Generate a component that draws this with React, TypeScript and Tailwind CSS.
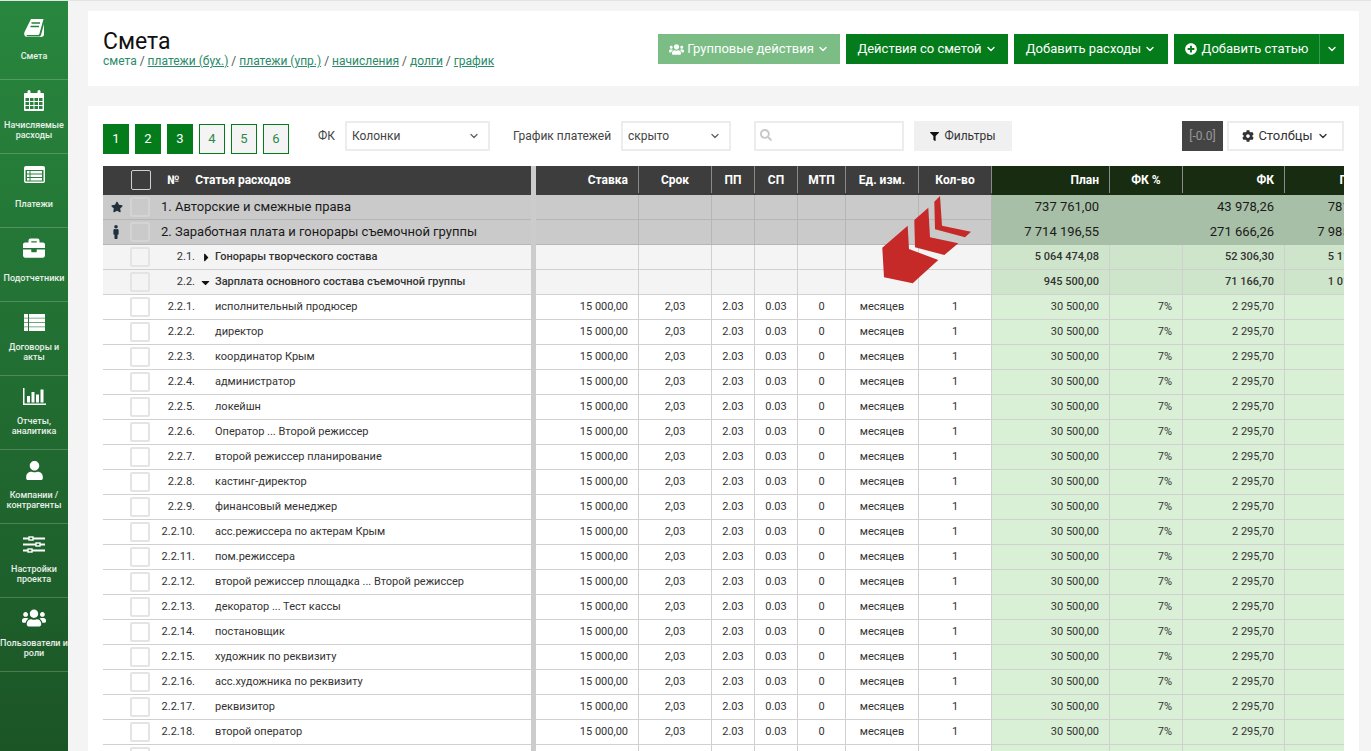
import { ReactNode } from 'react';
import { ChevronDown } from 'lucide-react';
import {
  FaBriefcase,
  FaCaretDown,
  FaCaretRight,
  FaCog,
  FaFilter,
  FaMale,
  FaPlusCircle,
  FaSearch,
  FaStar,
  FaUser,
  FaUsers,
} from 'react-icons/fa';

const GREEN = '#28803c';

const BookIcon = () => (
  <svg width="20" height="18" viewBox="0 0 20 18">
    <path d="M7 0h12.500L15.500 14.500c-.3 1-.8 1.500-2 1.500H4c-1.200 0-1.600.6-1.500 1 .1.300.5.500 1 .5h11.500c1 0 1.500-.4 2-1.500L20 5v11c-.5 1.200-1.500 2-3 2H3.500C1.500 18 .3 16.800.2 15c-.1-1 .2-1.800.7-2.700z" fill="#fff" />
    <path d="M7.500 4h8.500M6.500 7.500h8.500" stroke={GREEN} strokeWidth="1.300" />
  </svg>
);

const CalendarIcon = () => (
  <svg width="20" height="21" viewBox="0 0 20 21" fill="#fff">
    <rect x="0" y="3" width="20" height="18" rx="1" />
    <rect x="3.500" y="0" width="3" height="5" rx="1.500" />
    <rect x="13.500" y="0" width="3" height="5" rx="1.500" />
    <g fill={GREEN}>
      {[8, 12, 16].map((y) =>
        [1.500, 6, 10.500, 15].map((x) => <rect key={`${x}-${y}`} x={x} y={y} width="3.500" height="3" />),
      )}
    </g>
  </svg>
);

const ListAltIcon = () => (
  <svg width="21" height="17" viewBox="0 0 21 17">
    <rect width="21" height="17" rx="2" fill="#fff" />
    <rect x="1.500" y="4" width="18" height="11.500" fill={GREEN} />
    {[5, 8.500, 12].map((y) => (
      <g key={y} fill="#fff">
        <rect x="3" y={y} width="2.500" height="2.500" />
        <rect x="6.500" y={y} width="11.500" height="2.500" />
      </g>
    ))}
  </svg>
);

const ThListIcon = () => (
  <svg width="21" height="17" viewBox="0 0 21 17" fill="#fff">
    {[0, 4.400, 8.800, 13.200].map((y) => (
      <g key={y}>
        <rect x="0" y={y} width="4" height="3.800" />
        <rect x="5" y={y} width="16" height="3.800" />
      </g>
    ))}
  </svg>
);

const ChartIcon = () => (
  <svg width="23" height="17" viewBox="0 0 23 17" fill="#fff">
    <rect x="0" y="0" width="1.500" height="17" />
    <rect x="0" y="15.500" width="23" height="1.500" />
    <rect x="4" y="8" width="3" height="6.500" />
    <rect x="8.500" y="4" width="3" height="10.500" />
    <rect x="13" y="6.500" width="3" height="8" />
    <rect x="17.500" y="1.500" width="3" height="13" />
  </svg>
);

const SlidersIcon = () => (
  <svg width="22" height="17" viewBox="0 0 22 17" fill="none" stroke="#fff" strokeWidth="1.400">
    <path d="M0 2.500h6M10 2.500h12M0 8.500h13M17 8.500h5M0 14.500h5M9 14.500h13" strokeWidth="2" />
    <rect x="6" y="1" width="4" height="3" />
    <rect x="13" y="7" width="4" height="3" />
    <rect x="5" y="13" width="4" height="3" />
  </svg>
);

const navItems: { icon: ReactNode; label: ReactNode }[] = [
  { icon: <BookIcon />, label: 'Смета' },
  { icon: <CalendarIcon />, label: <>Начисляемые<br />расходы</> },
  { icon: <ListAltIcon />, label: 'Платежи' },
  { icon: <FaBriefcase size={22} />, label: 'Подотчетники' },
  { icon: <ThListIcon />, label: <>Договоры и<br />акты</> },
  { icon: <ChartIcon />, label: <>Отчеты,<br />аналитика</> },
  { icon: <FaUser size={19} />, label: <>Компании /<br />контрагенты</> },
  { icon: <SlidersIcon />, label: <>Настройки<br />проекта</> },
  { icon: <FaUsers size={24} />, label: <>Пользователи и<br />роли</> },
];

const itemNames = [
  'исполнительный продюсер',
  'директор',
  'координатор Крым',
  'администратор',
  'локейшн',
  'Оператор ... Второй режиссер',
  'второй режиссер планирование',
  'кастинг-директор',
  'финансовый менеджер',
  'асс.режиссера по актерам Крым',
  'пом.режиссера',
  'второй режиссер площадка ... Второй режиссер',
  'декоратор ... Тест кассы',
  'постановщик',
  'художник по реквизиту',
  'асс.художника по реквизиту',
  'реквизитор',
  'второй оператор',
  '',
];

type RowKind = 'group' | 'sub' | 'item';

const rowStyles = {
  group: { text: 'text-[13px] text-[#1a1a1a]', row: 'bg-[#cacaca] border-[#b6b6b6]', plan: 'bg-[#a7bfa6] border-[#a7bfa6]', cell: 'border-[#b6b6b6]', box: 'border-[#d4d4d4]' },
  sub: { text: 'text-[11px] font-medium text-[#333333]', row: 'bg-[#f4f4f4] border-[#d0d0d0]', plan: 'bg-[#cfe5cb] border-[#d0d0d0]', cell: 'border-[#d0d0d0]', box: 'border-[#e4e4e4]' },
  item: { text: 'text-[11px] text-[#333333]', row: 'bg-white border-[#d0d0d0]', plan: 'bg-[#d9efd6] border-[#d0d0d0]', cell: 'border-[#d0d0d0]', box: 'border-[#e4e4e4] bg-white' },
};

const HeaderCell = ({ className, children }: { className: string; children?: ReactNode }) => (
  <div className={`h-full shrink-0 flex items-center border-r border-[#8a8a8a] ${className}`}>{children}</div>
);

const TableHeader = () => (
  <div className="flex h-[29px] text-[12px] font-bold text-white">
    <div className="w-[428px] shrink-0 flex items-center bg-[#3d3d3d] pb-[2px]">
      <span className="ml-[28px] w-[20px] h-[20px] border border-[#d0d0d0] rounded-[2px]" />
      <span className="ml-[16px]">№</span>
      <span className="ml-[16px]">Статья расходов</span>
    </div>
    <div className="w-[5px] shrink-0 bg-[#cccccc]" />
    <div className="flex bg-[#3d3d3d] pb-[2px]">
      <HeaderCell className="w-[103px] justify-end pr-[10px]">Ставка</HeaderCell>
      <HeaderCell className="w-[73px] justify-center">Срок</HeaderCell>
      <HeaderCell className="w-[43px] justify-center">ПП</HeaderCell>
      <HeaderCell className="w-[43px] justify-center">СП</HeaderCell>
      <HeaderCell className="w-[48px] justify-center">МТП</HeaderCell>
      <HeaderCell className="w-[73px] justify-center">Ед. изм.</HeaderCell>
      <HeaderCell className="w-[73px] justify-center">Кол-во</HeaderCell>
    </div>
    <div className="flex bg-[#182c12] pb-[2px]">
      <HeaderCell className="w-[118px] justify-end pr-[10px]">План</HeaderCell>
      <HeaderCell className="w-[73px] justify-center">ФК %</HeaderCell>
      <HeaderCell className="w-[102px] justify-end pr-[10px]">ФК</HeaderCell>
      <HeaderCell className="w-[118px] justify-end pr-[34px]">План</HeaderCell>
    </div>
  </div>
);

interface RowProps {
  kind: RowKind;
  marker?: ReactNode;
  num?: string;
  caret?: ReactNode;
  name: string;
  plan: string;
  fk: string;
  total: string;
}

const TableRow = ({ kind, marker, num, caret, name, plan, fk, total }: RowProps) => {
  const s = rowStyles[kind];
  const isItem = kind === 'item';
  const numeric = `h-full shrink-0 flex items-center border-r ${s.cell}`;
  const planCell = `h-full shrink-0 flex items-center border-r justify-end pr-[10px] ${s.plan}`;
  const mid = ['w-[73px]', 'w-[43px]', 'w-[43px]', 'w-[48px]', 'w-[73px]', 'w-[73px]'];
  const midValues = isItem ? ['2,03', '2.03', '0.03', '0', 'месяцев', '1'] : ['', '', '', '', '', ''];

  return (
    <div className={`flex h-[25px] ${s.text}`}>
      <div className={`w-[428px] shrink-0 flex items-center border-b ${s.row}`}>
        <span className="w-[27px] flex justify-center text-[#22303c]">{marker}</span>
        <span className={`w-[20px] h-[20px] border-2 rounded-[2px] ${s.box}`} />
        {kind === 'group' ? (
          <span className="ml-[11px]">{num} {name}</span>
        ) : (
          <>
            <span className="w-[45px] text-right font-normal">{num}</span>
            <span className="w-[20px] flex justify-center text-[#111111]">{caret}</span>
            <span>{name}</span>
          </>
        )}
      </div>
      <div className="w-[5px] shrink-0 bg-[#cccccc]" />
      <div className={`flex border-b ${s.row}`}>
        <div className={`${numeric} w-[103px] justify-end pr-[10px]`}>{isItem ? '15 000,00' : ''}</div>
        {mid.map((w, i) => (
          <div key={i} className={`${numeric} ${w} justify-center`}>{midValues[i]}</div>
        ))}
      </div>
      <div className={`flex border-b ${s.plan}`}>
        <div className={`${planCell} w-[118px]`}>{plan}</div>
        <div className={`${planCell} w-[73px]`}>{isItem ? '7%' : ''}</div>
        <div className={`${planCell} w-[102px]`}>{fk}</div>
        <div className={`${planCell} w-[118px]`}>{total}</div>
      </div>
    </div>
  );
};

const ActionButton = ({ className = 'bg-[#047c1c]', children }: { className?: string; children: ReactNode }) => (
  <button className={`h-[30px] flex items-center justify-center text-white text-[13px] ${className}`}>{children}</button>
);

const Chevron = ({ className = '' }: { className?: string }) => <ChevronDown size={12} strokeWidth={2.75} className={className} />;

const SelectBox = ({ width, value }: { width: string; value: string }) => (
  <div className={`${width} h-[30px] flex items-center justify-between pl-[5px] pr-[8px] border-2 border-[#ececec] text-[12px] text-[#444444]`}>
    <span>{value}</span>
    <Chevron className="text-[#666666]" />
  </div>
);

const Step = ({ n, done }: { n: number; done?: boolean }) => (
  <div
    className={`w-[26px] h-[30px] flex items-center justify-center text-[13px] ${
      done ? 'bg-[#047c1c] text-white' : 'bg-[#f4f4f4] border border-[#047c1c] text-[#2a8a4a]'
    }`}
  >
    {n}
  </div>
);

export default function App() {
  return (
    <div className="flex h-[751px] overflow-hidden bg-[#f4f4f4] font-['Roboto',sans-serif] border-t border-[#e4e4e4]">
      <aside className="w-[68px] shrink-0 -mt-[1px] bg-gradient-to-b from-[#28873e] to-[#1b5526] text-white">
        {navItems.map((item, i) => (
          <div
            key={i}
            className={`flex flex-col items-center border-b border-white/20 ${i === 0 ? 'h-[80px] pt-[17px]' : 'h-[74px] pt-[9px]'}`}
          >
            <div className="h-[22px] flex items-center justify-center">{item.icon}</div>
            <div className={`h-[20px] flex items-center text-center text-[9px] leading-[10px] font-medium whitespace-nowrap text-white/90 ${i === 0 ? 'mt-[7px]' : 'mt-[9px]'}`}>
              <span>{item.label}</span>
            </div>
          </div>
        ))}
      </aside>

      <main className="flex-1 min-w-0 pl-[20px] pr-[12px] pt-[10px]">
        <header className="h-[75px] bg-white pl-[15px] pr-[15px] flex items-start justify-between">
          <div className="pt-[18px]">
            <h1 className="text-[23px] leading-[26px] text-[#111111]">Смета</h1>
            <div className="text-[12px] leading-[13px] text-[#555555]">
              <span className="text-[#2a8a6a]">смета</span> /{' '}
              <a className="text-[#2a8a6a] underline">платежи (бух.)</a> /{' '}
              <a className="text-[#2a8a6a] underline">платежи (упр.)</a> /{' '}
              <a className="text-[#2a8a6a] underline">начисления</a> /{' '}
              <a className="text-[#2a8a6a] underline">долги</a> /{' '}
              <a className="text-[#2a8a6a] underline">график</a>
            </div>
          </div>
          <div className="flex gap-[6px] pt-[23px]">
            <ActionButton className="w-[182px] gap-[3px] bg-[#7bbd85]">
              <FaUsers size={15} /> Групповые действия <Chevron />
            </ActionButton>
            <ActionButton className="w-[162px] gap-[3px] bg-[#047c1c]">
              Действия со сметой <Chevron />
            </ActionButton>
            <ActionButton className="w-[154px] gap-[3px] bg-[#047c1c]">
              Добавить расходы <Chevron />
            </ActionButton>
            <div className="flex">
              <ActionButton className="w-[145px] gap-[5px] bg-[#047c1c]">
                <FaPlusCircle size={12} /> Добавить статью
              </ActionButton>
              <ActionButton className="w-[25px] bg-[#047c1c] border-l border-[#3a9a50]">
                <Chevron />
              </ActionButton>
            </div>
          </div>
        </header>

        <section className="mt-[20px] h-[700px] bg-white pl-[15px] pt-[15px]">
          <div className="w-[1241px] flex items-center h-[30px] text-[12px] text-[#444444]">
            <div className="flex gap-[6px] mt-[6px]">
              <Step n={1} done />
              <Step n={2} done />
              <Step n={3} done />
              <Step n={4} />
              <Step n={5} />
              <Step n={6} />
            </div>
            <span className="ml-[29px] w-[27px]">ФК</span>
            <SelectBox width="w-[145px]" value="Колонки" />
            <span className="ml-[23px] w-[108px]">График платежей</span>
            <SelectBox width="w-[110px]" value="скрыто" />
            <div className="relative ml-[23px] w-[150px] h-[30px]">
              <FaSearch size={12} className="absolute left-[6px] top-[8px] text-[#c8c8c8]" />
              <input className="w-full h-full border-2 border-[#ececec] outline-none" />
            </div>
            <button className="ml-[10px] w-[98px] h-[30px] flex items-center justify-center gap-[5px] bg-[#f0f0f0] text-[12px] text-[#333333]">
              <FaFilter size={9} className="text-[#111111]" /> Фильтры
            </button>
            <div className="ml-auto flex gap-[4px]">
              <div className="w-[41px] h-[30px] flex items-center justify-center bg-[#444444] text-[12px] text-[#999999]">[-0.0]</div>
              <button className="w-[117px] h-[30px] flex items-center justify-center gap-[4px] border-2 border-[#ececec] text-[13px] text-[#333333]">
                <FaCog size={12} /> Столбцы <Chevron />
              </button>
            </div>
          </div>

          <div className="relative mt-[15px] w-[1241px] overflow-hidden">
            <TableHeader />
            <TableRow kind="group" marker={<FaStar size={12} />} num="1." name="Авторские и смежные права" plan="737 761,00" fk="43 978,26" total="781 739,26" />
            <TableRow kind="group" marker={<FaMale size={14} className="-ml-[2px]" />} num="2." name="Заработная плата и гонорары съемочной группы" plan="7 714 196,55" fk="271 666,26" total="7 985 862,81" />
            <TableRow kind="sub" num="2.1." caret={<FaCaretRight size={13} className="ml-[3px]" />} name="Гонорары творческого состава" plan="5 064 474,08" fk="52 306,30" total="5 116 780,38" />
            <TableRow kind="sub" num="2.2." caret={<FaCaretDown size={13} />} name="Зарплата основного состава съемочной группы" plan="945 500,00" fk="71 166,70" total="1 016 666,70" />
            {itemNames.map((name, i) => (
              <TableRow key={i} kind="item" num={`2.2.${i + 1}.`} name={name} plan="30 500,00" fk="2 295,70" total="32 795,70" />
            ))}
            <svg className="absolute left-[777px] top-[28px]" width="95" height="92" viewBox="880 194 95 92" fill="#c52a28">
              <polygon points="882.3,247.7 907.7,225.7 909,249 938.3,260 912.7,283.300 884,277.300" />
              <polygon points="914.3,220 928.3,207.700 930,237.300 958.300,243.300 944.300,255 915,247.300" />
              <polygon points="934.300,201.700 940,196 942,225.700 971,231.700 965,237.300 935,229.300" />
            </svg>
          </div>
        </section>
      </main>
    </div>
  );
}
